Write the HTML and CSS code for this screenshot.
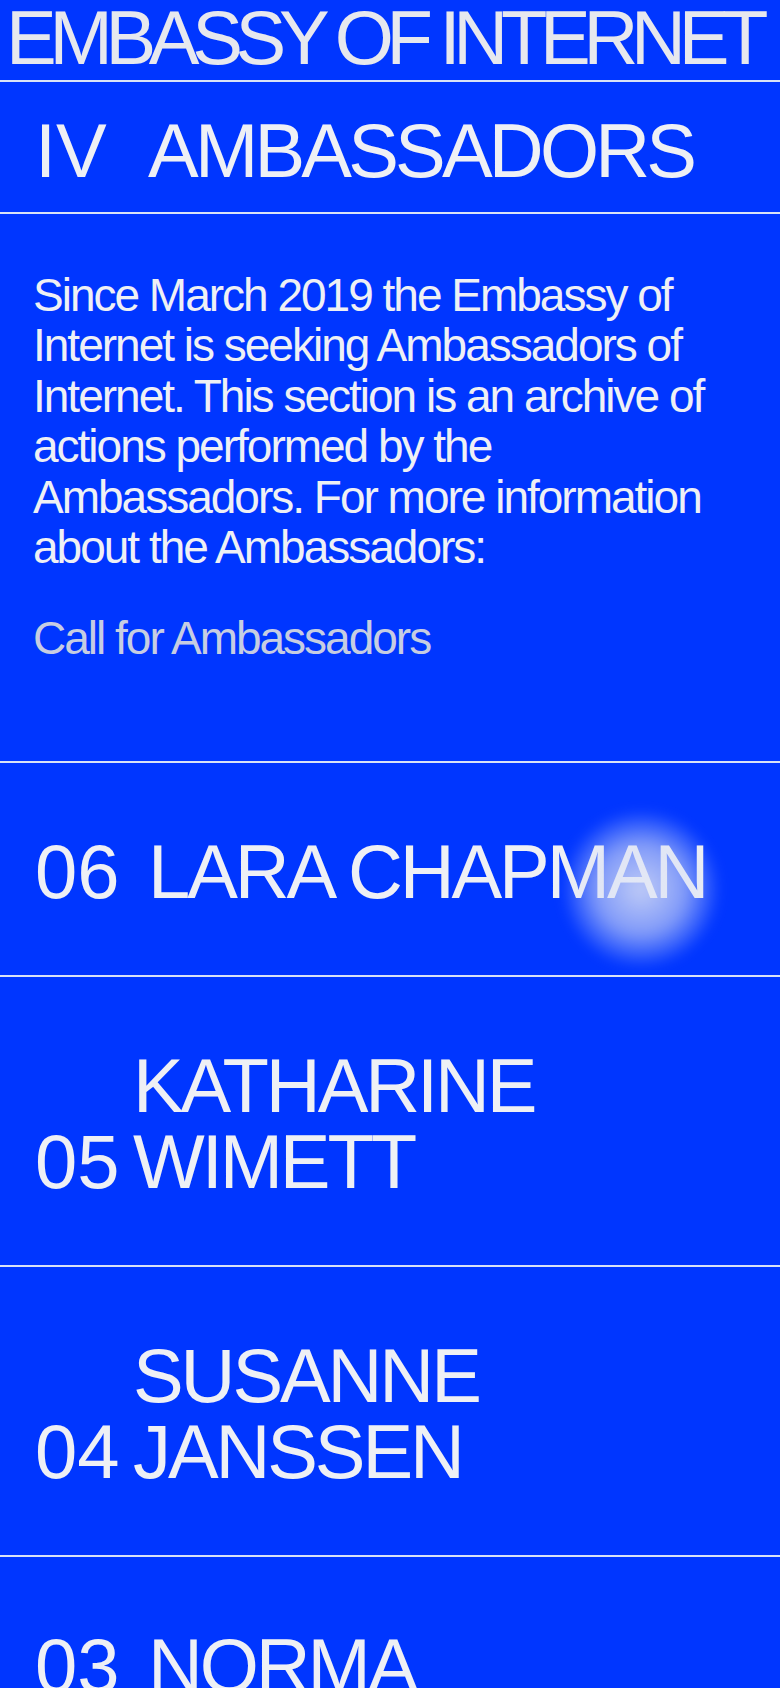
FILE: index.html
```html
<!DOCTYPE html>
<html lang="en">
<head>
    <meta charset="UTF-8">
    <meta name="viewport" content="width=device-width, initial-scale=1.0">
    <title>Embassy of Internet — Ambassadors</title>
    <link rel="stylesheet" href="styles.css">
</head>
<body>
    <header class="site-header">
        <h1 class="site-title">EMBASSY OF INTERNET</h1>
    </header>

    <main>
        <section class="section-head">
            <h2 class="section-title">
                <span class="num">IV</span>
                <span>AMBASSADORS</span>
            </h2>
        </section>

        <section class="intro">
            <p>Since March 2019 the Embassy of Internet is seeking Ambassadors of Internet. This section is an archive of actions performed by the Ambassadors. For more information about the Ambassadors:</p>
            <a class="intro-link" href="#">Call for Ambassadors</a>
        </section>

        <ul class="entries">
            <li class="entry">
                <a href="#" class="entry-link">
                    <span class="num">06</span>
                    <span class="entry-name">LARA CHAPMAN</span>
                </a>
                <div class="glow"></div>
            </li>
            <li class="entry entry--stacked">
                <a href="#" class="entry-link">
                    <span class="num">05</span>
                    <span class="entry-name">KATHARINE WIMETT</span>
                </a>
            </li>
            <li class="entry entry--stacked">
                <a href="#" class="entry-link">
                    <span class="num">04</span>
                    <span class="entry-name">SUSANNE JANSSEN</span>
                </a>
            </li>
            <li class="entry">
                <a href="#" class="entry-link">
                    <span class="num">03</span>
                    <span class="entry-name">NORMA</span>
                </a>
            </li>
        </ul>
    </main>
</body>
</html>
```

FILE: styles.css
```css
:root {
    --blue: #0036ff;
    --text: #eef0f5;
    --muted: #c6cde2;
    --rule: #d9e3f7;
}

* {
    margin: 0;
    padding: 0;
    box-sizing: border-box;
}

body {
    background-color: var(--blue);
    color: var(--text);
    font-family: "Liberation Sans", Arial, sans-serif;
    overflow: hidden;
}

a {
    color: inherit;
    text-decoration: none;
}

.site-header {
    padding: 0 0 4px 6px;
    border-bottom: 2px solid var(--rule);
}

.site-title {
    font-size: 76px;
    font-weight: normal;
    line-height: 76px;
    letter-spacing: -7.3px;
    color: #e6e8ee;
    white-space: nowrap;
}

.section-head {
    padding: 31px 34px 23px;
    border-bottom: 2px solid var(--rule);
}

.section-title,
.entry-link {
    display: flex;
    align-items: flex-end;
    font-size: 76px;
    font-weight: normal;
    line-height: 76px;
    letter-spacing: -3.1px;
}

.section-title {
    letter-spacing: -3.8px;
}

.num {
    flex: none;
    min-width: 114px;
    padding-left: 1px;
    letter-spacing: 0;
}

.intro {
    padding: 56px 33px 98px;
    border-bottom: 2px solid var(--rule);
    font-size: 46px;
    line-height: 50.4px;
    letter-spacing: -2px;
}

.intro-link {
    display: block;
    margin-top: 40.6px;
    color: var(--muted);
}

.entries {
    list-style: none;
}

.entry {
    position: relative;
    padding: 71px 34px 65px;
    border-bottom: 2px solid var(--rule);
}

.entry--stacked .num {
    min-width: 99px;
}

.glow {
    position: absolute;
    left: 561px;
    top: 46px;
    width: 160px;
    height: 160px;
    border-radius: 50%;
    background: radial-gradient(circle closest-side, rgba(225, 230, 245, 0.85) 0%, rgba(215, 222, 245, 0.6) 55%, rgba(200, 210, 245, 0) 100%);
    filter: blur(6px);
    pointer-events: none;
}
```
